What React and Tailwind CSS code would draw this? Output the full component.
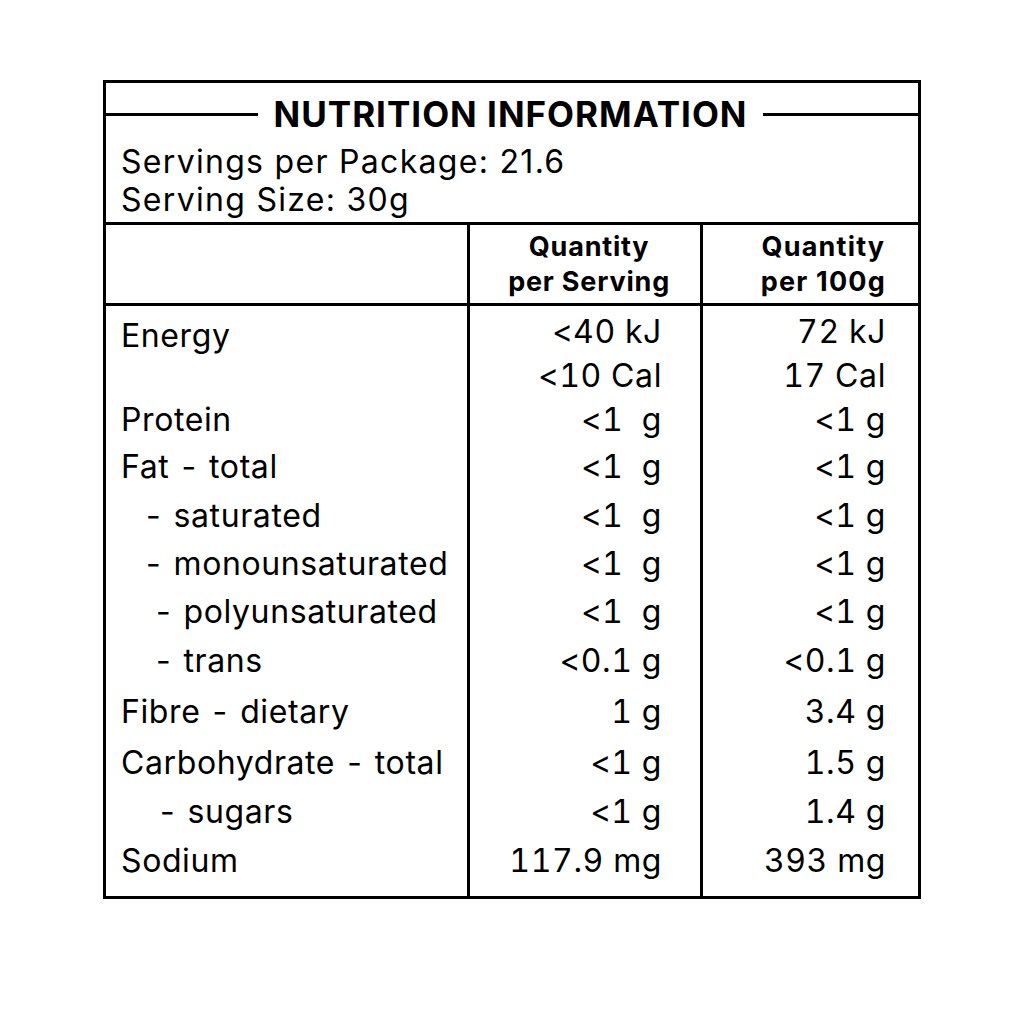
import React from 'react';

const FONT = { fontFamily: 'Inter, "Liberation Sans", sans-serif' };

// label, indent (px), per serving, per 100g, row height
const ROWS = [
  ['Energy', 0, '<40 kJ', '72 kJ', 44],
  ['', 0, '<10 Cal', '17 Cal', 43],
  ['Protein', 0, '<1  g', '<1 g', 46],
  ['Fat - total', 0, '<1  g', '<1 g', 48],
  ['- saturated', 22, '<1  g', '<1 g', 49],
  ['- monounsaturated', 22, '<1  g', '<1 g', 48],
  ['- polyunsaturated', 32, '<1  g', '<1 g', 47],
  ['- trans', 32, '<0.1 g', '<0.1 g', 51],
  ['Fibre - dietary', 0, '1 g', '3.4 g', 52],
  ['Carbohydrate - total', 0, '<1 g', '1.5 g', 49],
  ['- sugars', 36, '<1 g', '1.4 g', 49],
  ['Sodium', 0, '117.9 mg', '393 mg', 49],
];

export default function App() {
  return (
    <div className="min-h-screen bg-white text-black pt-[80px] pl-[103px]" style={FONT}>
      <div className="w-[818px] h-[819px] border-[3px] border-black flex flex-col">
        {/* title block */}
        <div className="h-[142px] border-b-[3px] border-black">
          <div className="flex items-center h-[60px] pt-[2px]">
            <div className="w-[152px] h-[3px] bg-black"></div>
            <h1 className="mx-auto text-[35px] font-bold leading-none tracking-[1px]">NUTRITION INFORMATION</h1>
            <div className="w-[155px] h-[3px] bg-black"></div>
          </div>
          <div className="pl-[15px] text-[32px] leading-[38px] tracking-[1.3px]">
            <p>Servings per Package: 21.6</p>
            <p>Serving Size: 30g</p>
          </div>
        </div>

        {/* column header */}
        <div className="grid grid-cols-[361px_233px_1fr] h-[81px] border-b-[3px] border-black">
          <div></div>
          <div className="border-l-[3px] border-black flex justify-end items-center pr-[30px]">
            <div className="text-center font-bold text-[27px] leading-[35px] tracking-[0.8px]">Quantity<br />per Serving</div>
          </div>
          <div className="border-l-[3px] border-black flex justify-end items-center pr-[32px]">
            <div className="text-center font-bold text-[27px] leading-[35px] tracking-[1.2px]">Quantity<br />per 100g</div>
          </div>
        </div>

        {/* values */}
        <div className="grid grid-cols-[361px_233px_1fr] flex-1 text-[32px] tracking-[0.6px] tabular-nums">
          <div className="pt-[4px] pl-[15px]">
            {ROWS.map(([label, indent, , , h], i) => (
              <div
                key={i}
                className="whitespace-pre flex items-center"
                style={{ height: h, paddingLeft: indent, paddingTop: i === 0 ? 8 : 0 }}
              >
                {label}
              </div>
            ))}
          </div>
          <div className="border-l-[3px] border-black pt-[4px] pr-[38px]">
            {ROWS.map(([, , serving, , h], i) => (
              <div key={i} className="whitespace-pre flex items-center justify-end" style={{ height: h }}>
                {serving}
              </div>
            ))}
          </div>
          <div className="border-l-[3px] border-black pt-[4px] pr-[32px]">
            {ROWS.map(([, , , per100, h], i) => (
              <div key={i} className="whitespace-pre flex items-center justify-end" style={{ height: h }}>
                {per100}
              </div>
            ))}
          </div>
        </div>
      </div>
    </div>
  );
}
